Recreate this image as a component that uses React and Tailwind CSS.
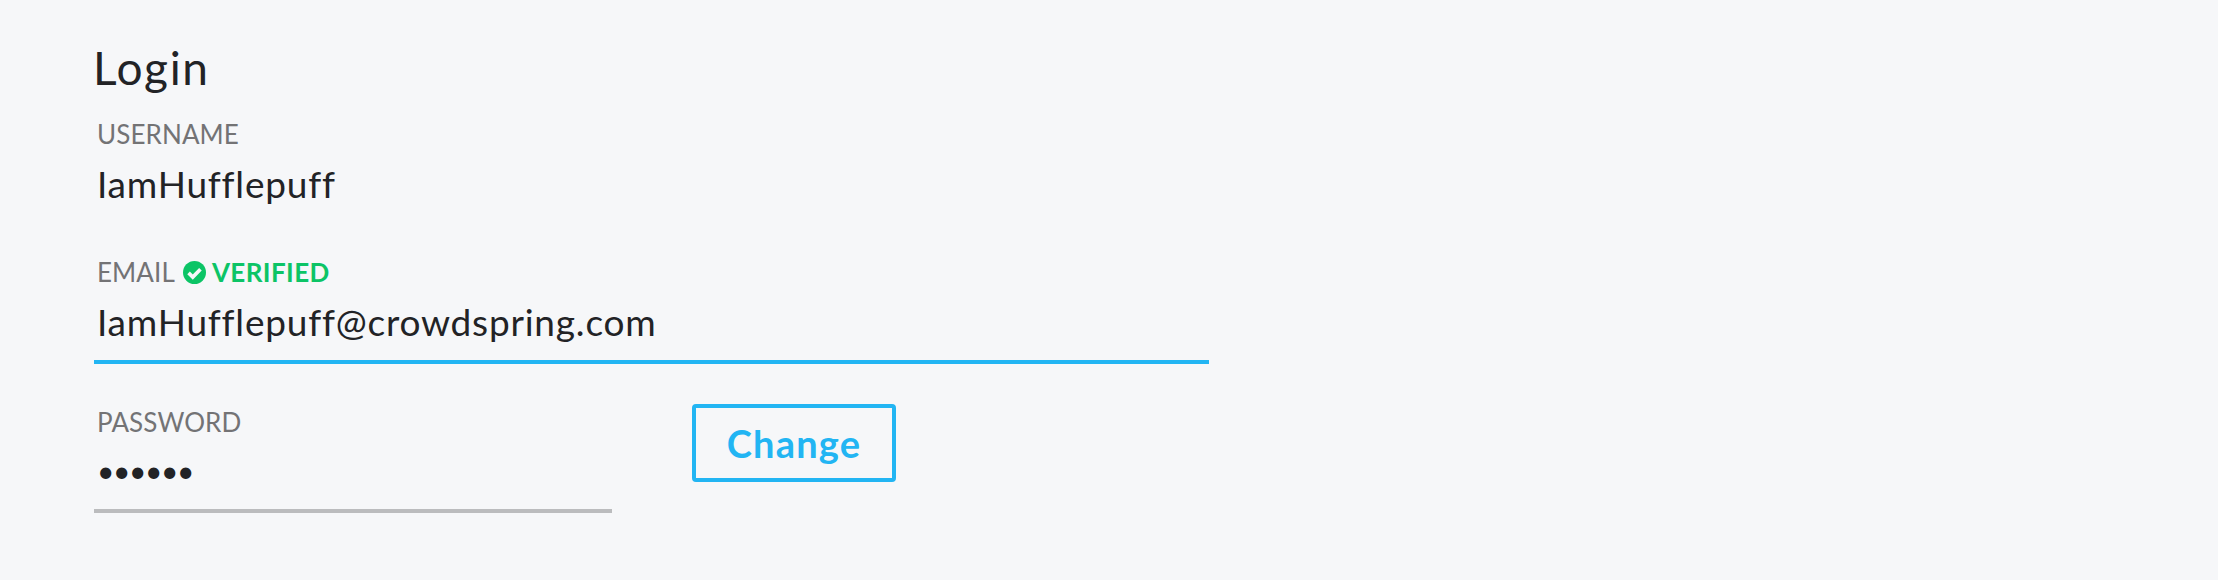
import React from 'react';

const CheckBadge = () => (
  <svg viewBox="0 0 24 24" className="w-[23px] h-[23px] ml-[8px] mr-[6px] shrink-0">
    <circle cx="12" cy="12" r="12" fill="#0cc466" />
    <path d="M5.8 12.4l4.4 4.4 8-8.2" fill="none" stroke="#f6f7f9" strokeWidth="3.8" />
  </svg>
);

const Label = ({ children }) => (
  <span className="text-[26px] leading-[30px] text-[#737375] tracking-[0.1px]">{children}</span>
);

export default function App() {
  return (
    <div className="w-[2218px] h-[580px] bg-[#f6f7f9] pl-[94px] pt-[41px] font-[Lato,sans-serif] text-[#222326] overflow-hidden">
      <h1 className="-ml-[1px] text-[46px] leading-[54px] tracking-[1.6px]">Login</h1>

      <div className="mt-[24px] pl-[3px]">
        <Label>USERNAME</Label>
        <div className="mt-[12px] text-[37px] leading-[44px] tracking-[0.8px]">IamHufflepuff</div>
      </div>

      <div className="mt-[51px] w-[1115px] border-b-4 border-[#22b5f3]">
        <div className="pl-[3px] flex items-center h-[30px]">
          <Label>EMAIL</Label>
          <CheckBadge />
          <span className="text-[26px] leading-[30px] font-bold text-[#0cc466] tracking-[0.4px]">VERIFIED</span>
        </div>
        <div className="pl-[3px] mt-[13px] pb-[16px] text-[37px] leading-[44px] tracking-[0.8px]">
          IamHufflepuff@crowdspring.com
        </div>
      </div>

      <div className="flex items-start mt-[40px]">
        <div className="w-[518px] border-b-4 border-[#bbbcbe] mt-[3px]">
          <div className="pl-[3px]">
            <Label>PASSWORD</Label>
          </div>
          <div className="pl-[3px] mt-[10px] pb-[17px] text-[30px] leading-[44px] -tracking-[1.4px]">••••••</div>
        </div>
        <button className="ml-[80px] w-[204px] h-[78px] border-4 border-[#22b5f3] rounded-[4px] text-[38px] font-bold tracking-[1.2px] text-[#22b5f3]">
          Change
        </button>
      </div>
    </div>
  );
}
